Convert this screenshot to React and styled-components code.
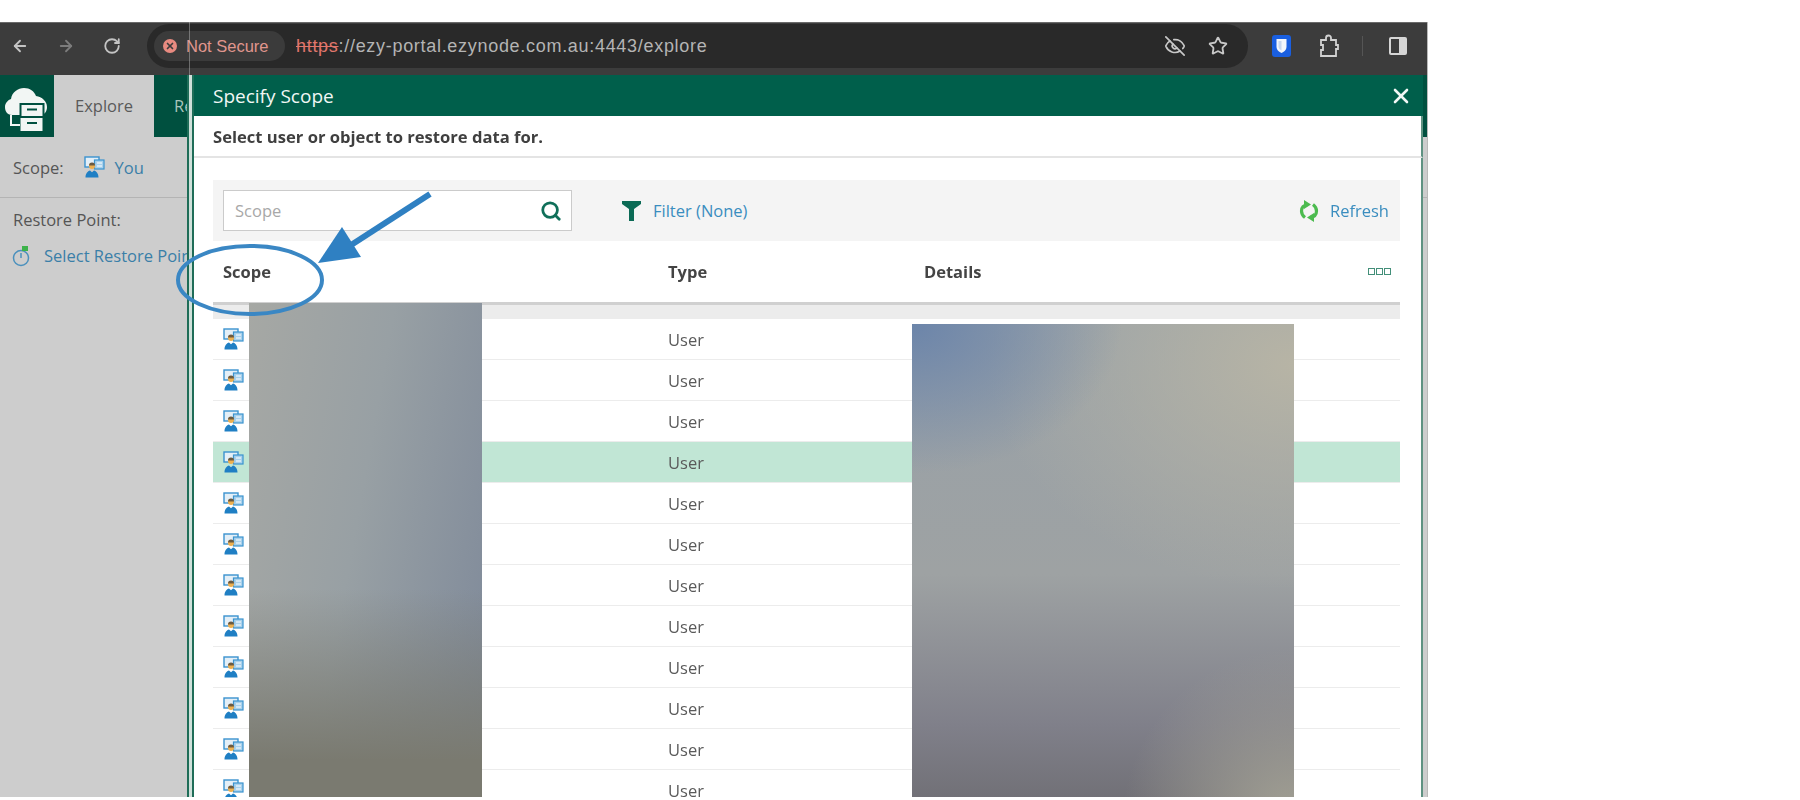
import React from 'react';
import styled, { createGlobalStyle } from 'styled-components';
import { ArrowLeft, ArrowRight, RotateCw, EyeOff, Star, Search, X } from 'lucide-react';

const GlobalStyle = createGlobalStyle`
  html, body {
    margin: 0;
    background: #fff;
  }
  * {
    box-sizing: border-box;
  }
`;

const Page = styled.div`
  position: relative;
  width: 1800px;
  height: 800px;
  padding-top: 22px;
  overflow: hidden;
  font-family: 'Open Sans', 'Liberation Sans', sans-serif;
  filter: blur(0.7px);
`;

const Shot = styled.div`
  position: relative;
  width: 1428px;
  height: 775px;
  display: flex;
  flex-direction: column;
  overflow: hidden;
  border-right: 1px solid #b9b9b9;
`;

const Chrome = styled.div`
  height: 53px;
  flex: none;
  display: flex;
  align-items: flex-start;
  padding: 1px 0 0 11px;
  background: #3c3c3c;
  border-top: 1px solid #6a6a6a;
`;

const Nav = styled.div`
  height: 44px;
  display: flex;
  align-items: center;
  gap: 28px;
  color: #c4c4c4;
`;

const Pill = styled.div`
  width: 1101px;
  height: 44px;
  margin-left: 26px;
  padding: 0 20px 0 7px;
  display: flex;
  align-items: center;
  background: #292929;
  border-radius: 22px;
`;

const Chip = styled.div`
  width: 131px;
  height: 30px;
  padding-left: 9px;
  display: flex;
  align-items: center;
  gap: 9px;
  background: #3b3b3b;
  border-radius: 15px;
  color: #e0968e;
  font-family: 'Liberation Sans', sans-serif;
  font-size: 16.5px;
  white-space: nowrap;
`;

const ChipDot = styled.span`
  width: 14px;
  height: 14px;
  flex: none;
  display: flex;
  align-items: center;
  justify-content: center;
  border-radius: 50%;
  background: #e88a80;
  color: #3b3b3b;
`;

const Url = styled.div`
  margin-left: 11px;
  color: #b4b4b4;
  font-family: 'Liberation Sans', sans-serif;
  font-size: 18px;
  letter-spacing: 0.7px;
  white-space: nowrap;
`;

const Insecure = styled.span`
  color: #e0766c;
  text-decoration: line-through;
`;

const PillIcons = styled.div`
  margin-left: auto;
  display: flex;
  align-items: center;
  gap: 22px;
  color: #c8c8c8;
`;

const Tools = styled.div`
  height: 44px;
  display: flex;
  align-items: center;
  color: #cfcfcf;
`;

const Tool = styled.span`
  display: flex;
  margin-left: ${(p) => p.$gap}px;
`;

const ToolDivider = styled.span`
  width: 1px;
  height: 20px;
  margin-left: ${(p) => p.$gap}px;
  background: #555;
`;

const Seam = styled.div`
  position: absolute;
  left: 189px;
  top: 0;
  height: 53px;
  width: 1px;
  background: rgba(190, 190, 190, 0.45);
`;

const Workspace = styled.div`
  flex: 1;
  min-height: 0;
  display: flex;
`;

const BackApp = styled.div`
  width: 187px;
  flex: none;
  overflow: hidden;
  background: #cdcdcd;
  color: #555;
  font-size: 16.5px;
`;

const AppTabs = styled.div`
  height: 62px;
  display: flex;
  background: #00503f;
`;

const LogoTile = styled.div`
  width: 54px;
  flex: none;
  padding: 11px 0 0 3px;
`;

const AppTab = styled.div`
  width: ${(p) => p.$width}px;
  flex: none;
  padding: 19px 0 0 ${(p) => p.$inset}px;
  white-space: nowrap;
  overflow: hidden;
  background: ${(p) => (p.$active ? '#cdcdcd' : 'transparent')};
  color: ${(p) => (p.$active ? '#5a5a5a' : '#a9c4bb')};
`;

const ScopeLine = styled.div`
  height: 61px;
  padding-left: 13px;
  display: flex;
  align-items: center;
  border-bottom: 1px solid #b4b4b4;
`;

const ScopeIcon = styled.span`
  display: flex;
  margin: 0 10px 0 20px;
`;

const BackLink = styled.span`
  color: #3a7fa8;
`;

const PointTitle = styled.div`
  margin: 10px 0 0 13px;
`;

const PointLink = styled.div`
  margin: 13px 0 0 12px;
  display: flex;
  align-items: center;
  gap: 12px;
  white-space: nowrap;

  svg {
    flex: none;
  }
`;

const Modal = styled.div`
  width: 1231px;
  flex: none;
  display: flex;
  flex-direction: column;
  background: #fff;
  border-left: 2px solid #1f6d58;
  box-shadow: -3px 0 0 #cfe0da, -5px 0 0 #1f6d58;
  margin-left: 5px;
`;

const ModalHeader = styled.div`
  height: 41px;
  flex: none;
  padding: 0 10px 0 19px;
  display: flex;
  align-items: center;
  justify-content: space-between;
  background: #005f4b;
  color: #f1f7f5;
  font-size: 19px;
`;

const ModalLead = styled.div`
  height: 42px;
  flex: none;
  padding-left: 19px;
  display: flex;
  align-items: center;
  border-bottom: 2px solid #e4e4e4;
  border-right: 2px solid #5f9282;
  color: #3f3f3f;
  font-size: 16.6px;
  font-weight: 700;
`;

const ModalBody = styled.div`
  flex: 1;
  min-height: 0;
  padding: 22px 21px 0 19px;
  overflow: hidden;
  border-right: 2px solid #5f9282;
  font-size: 16.5px;
`;

const Toolbar = styled.div`
  height: 61px;
  padding: 0 11px 0 10px;
  display: flex;
  align-items: center;
  background: #f4f4f4;
`;

const SearchBox = styled.div`
  width: 349px;
  height: 41px;
  padding: 0 9px 0 11px;
  display: flex;
  align-items: center;
  justify-content: space-between;
  background: #fff;
  border: 1px solid #cbcbcb;
  color: #a8a8a8;
`;

const ToolAction = styled.div`
  display: flex;
  align-items: center;
  gap: ${(p) => p.$gap}px;
  margin-left: ${(p) => p.$left || 0};
  color: #3a8dbf;
`;

const HeadRow = styled.div`
  height: 64px;
  padding: 0 9px 0 10px;
  display: grid;
  grid-template-columns: 445px 256px 1fr auto;
  align-items: center;
  border-bottom: 3px solid #d0d0d0;
  color: #444;
  font-weight: 700;
`;

const ColumnDots = styled.span`
  display: flex;
  gap: 1px;
`;

const ColumnDot = styled.span`
  width: 7px;
  height: 7px;
  border: 1.8px solid #438f79;
`;

const GroupRow = styled.div`
  height: 14px;
  background: #ececec;
`;

const Rows = styled.div`
  position: relative;
`;

const Row = styled.div`
  height: 41px;
  padding-left: 10px;
  display: grid;
  grid-template-columns: 445px 1fr;
  align-items: center;
  border-bottom: 1px solid #ececec;
  background: ${(p) => (p.$selected ? '#c1e6d5' : 'transparent')};
  color: #5a5a5a;
`;

const RowIcon = styled.span`
  display: flex;
`;

const RedactedName = styled.div`
  position: absolute;
  left: 36px;
  top: -16px;
  width: 233px;
  height: 520px;
  background:
    linear-gradient(180deg, rgba(124, 124, 112, 0) 55%, #7a7a70 88%),
    linear-gradient(100deg, #a6a8a4 0%, #98a0a4 45%, #7d8899 100%);
`;

const RedactedDetails = styled.div`
  position: absolute;
  left: 699px;
  top: 5px;
  width: 382px;
  height: 500px;
  background:
    radial-gradient(ellipse 55% 30% at 0% 0%, #6c85aa 0%, rgba(108, 133, 170, 0) 100%),
    radial-gradient(ellipse 80% 45% at 100% 8%, #b7b4a5 0%, rgba(183, 180, 165, 0) 100%),
    radial-gradient(ellipse 45% 35% at 100% 100%, #a5a396 0%, rgba(165, 163, 150, 0) 100%),
    linear-gradient(180deg, #98a1a8 0%, #9ea2a3 50%, #80808a 80%, #6c6b70 100%);
`;

const SideSliver = styled.div`
  flex: 1;
  display: flex;
  flex-direction: column;
  background: #cdcdcd;
`;

const SliverTop = styled.div`
  height: 62px;
  background: #00503f;
`;

const SliverScope = styled.div`
  height: 61px;
  border-bottom: 1px solid #b4b4b4;
`;

const Annotation = styled.svg`
  position: absolute;
  left: 0;
  top: 0;
`;

const UserIcon = () => (
  <svg width="21" height="22" viewBox="0 0 21 22">
    <rect x="1" y="1" width="14" height="10" fill="#e4eff7" stroke="#3b93cf" strokeWidth="1.4" />
    <rect x="10.500" y="4" width="9.500" height="9" fill="#a9d1ec" stroke="#3b93cf" strokeWidth="1.2" />
    <path d="M13 7h5M13 10h5" stroke="#fff" strokeWidth="1" />
    <circle cx="8" cy="10" r="3" fill="#eeb04f" />
    <path d="M5 9.500a3 3 0 0 1 6 0z" fill="#6a5a42" />
    <path d="M1.500 21.500c0-4 2.200-6.500 4.500-7l2 1.800 2-1.800c2.300.5 4.500 3 4.500 7z" fill="#1f7fc4" />
  </svg>
);

const Logo = () => (
  <svg width="46" height="46" viewBox="0 0 46 46" fill="none">
    <path
      d="M9 29C4 29 2 25 2 21c0-4 3-7 6-8 1-7 7-11 13-11 6 0 10 3 12 8 6 1 11 5 11 11 0 4-2 7-5 8z"
      fill="#f2f6f4"
    />
    <path d="M8 29v10h9" stroke="#f2f6f4" strokeWidth="2" />
    <rect x="17.500" y="18" width="23" height="13" fill="#f2f6f4" stroke="#005040" strokeWidth="2" />
    <rect x="17.500" y="32" width="22" height="13" fill="#f2f6f4" />
    <path d="M24 23.500h10M24 37h10" stroke="#005040" strokeWidth="2" />
  </svg>
);

const TimerIcon = () => (
  <svg width="20" height="22" viewBox="0 0 20 22" fill="none">
    <circle cx="9" cy="13" r="7.500" stroke="#4a90bd" strokeWidth="1.500" />
    <path d="M9 8v5" stroke="#4a90bd" strokeWidth="1.500" />
    <path d="M10 1h6v5h-6z" fill="#3db24a" />
  </svg>
);

const FilterIcon = () => (
  <svg width="19" height="22" viewBox="0 0 19 22">
    <path d="M0 1h19v3l-7 5v12h-5V9L0 4z" fill="#0b6a55" />
  </svg>
);

const RefreshIcon = () => (
  <svg width="22" height="24" viewBox="0 0 22 24" fill="none" stroke="#4cbb4f" strokeWidth="3.200">
    <path d="M10 5.500C6 6 3.500 8.500 3.500 12c0 3 1.500 5 3.500 6.500" />
    <path d="M12 18.500c4-.5 6.500-3 6.500-6.500 0-3-1.500-5-3.500-6.500" />
    <path d="M6 1l7 4.500-7 4.500zM16 23l-7-4.500 7-4.500z" fill="#4cbb4f" stroke="none" />
  </svg>
);

const ShieldIcon = () => (
  <svg width="19" height="22" viewBox="0 0 19 22">
    <rect width="19" height="22" rx="3" fill="#1a5fe0" />
    <path d="M4.500 4h10v8c0 3-2.500 5-5 6-2.500-1-5-3-5-6z" fill="#f3f6fb" />
    <path d="M9.500 6v9.500c-1.500-.8-3-2-3-3.800V6z" fill="#c8d6ee" />
  </svg>
);

const ExtensionIcon = () => (
  <svg width="22" height="24" viewBox="0 0 22 24" fill="none" stroke="#d2d2d2" strokeWidth="1.800">
    <path d="M3 6h5V4a2.500 2.500 0 0 1 5 0v2h5v5h2v4h-2v7H3v-6h2v-5H3z" />
  </svg>
);

const SidePanelIcon = () => (
  <svg width="20" height="20" viewBox="0 0 20 20">
    <rect x="1" y="1" width="18" height="18" rx="2" fill="#d6d6d6" />
    <rect x="3" y="3" width="8" height="14" fill="#3c3c3c" />
  </svg>
);

const rowCount = 12;
const selectedRow = 3;

const App = () => (
  <>
    <GlobalStyle />
    <Page>
      <Shot>
        <Chrome>
          <Nav>
            <ArrowLeft size={18} strokeWidth={2.4} />
            <ArrowRight size={18} strokeWidth={2.4} color="#7c7c7c" />
            <RotateCw size={18} strokeWidth={2.4} />
          </Nav>
          <Pill>
            <Chip>
              <ChipDot>
                <X size={10} strokeWidth={4} />
              </ChipDot>
              Not Secure
            </Chip>
            <Url>
              <Insecure>https</Insecure>://ezy-portal.ezynode.com.au:4443/explore
            </Url>
            <PillIcons>
              <EyeOff size={22} strokeWidth={1.8} />
              <Star size={20} strokeWidth={2.2} />
            </PillIcons>
          </Pill>
          <Tools>
            <Tool $gap={24}>
              <ShieldIcon />
            </Tool>
            <Tool $gap={27}>
              <ExtensionIcon />
            </Tool>
            <ToolDivider $gap={22} />
            <Tool $gap={25}>
              <SidePanelIcon />
            </Tool>
          </Tools>
        </Chrome>
        <Workspace>
          <BackApp>
            <AppTabs>
              <LogoTile>
                <Logo />
              </LogoTile>
              <AppTab $active $width={100} $inset={21}>
                Explore
              </AppTab>
              <AppTab $width={33} $inset={20}>
                Re
              </AppTab>
            </AppTabs>
            <ScopeLine>
              Scope:
              <ScopeIcon>
                <UserIcon />
              </ScopeIcon>
              <BackLink>You</BackLink>
            </ScopeLine>
            <PointTitle>Restore Point:</PointTitle>
            <PointLink>
              <TimerIcon />
              <BackLink>Select Restore Point</BackLink>
            </PointLink>
          </BackApp>
          <Modal>
            <ModalHeader>
              Specify Scope
              <X size={24} strokeWidth={2.6} />
            </ModalHeader>
            <ModalLead>Select user or object to restore data for.</ModalLead>
            <ModalBody>
              <Toolbar>
                <SearchBox>
                  Scope
                  <Search size={22} strokeWidth={3} color="#0f6f59" />
                </SearchBox>
                <ToolAction $gap={12} $left="50px">
                  <FilterIcon />
                  Filter (None)
                </ToolAction>
                <ToolAction $gap={10} $left="auto">
                  <RefreshIcon />
                  Refresh
                </ToolAction>
              </Toolbar>
              <HeadRow>
                <span>Scope</span>
                <span>Type</span>
                <span>Details</span>
                <ColumnDots>
                  <ColumnDot />
                  <ColumnDot />
                  <ColumnDot />
                </ColumnDots>
              </HeadRow>
              <GroupRow />
              <Rows>
                {Array.from({ length: rowCount }, (_, i) => (
                  <Row key={i} $selected={i === selectedRow}>
                    <RowIcon>
                      <UserIcon />
                    </RowIcon>
                    <span>User</span>
                  </Row>
                ))}
                <RedactedName />
                <RedactedDetails />
              </Rows>
            </ModalBody>
          </Modal>
          <SideSliver>
            <SliverTop />
            <SliverScope />
          </SideSliver>
        </Workspace>
        <Seam />
      </Shot>
      <Annotation width="1800" height="800" viewBox="0 0 1800 800" fill="none">
        <ellipse cx="250" cy="280" rx="72" ry="34" stroke="#3a87c4" strokeWidth="4" />
        <path d="M430 194L348 247" stroke="#2f80c2" strokeWidth="6" />
        <path d="M318 263L342 227L361 257z" fill="#2f80c2" />
      </Annotation>
    </Page>
  </>
);

export default App;
